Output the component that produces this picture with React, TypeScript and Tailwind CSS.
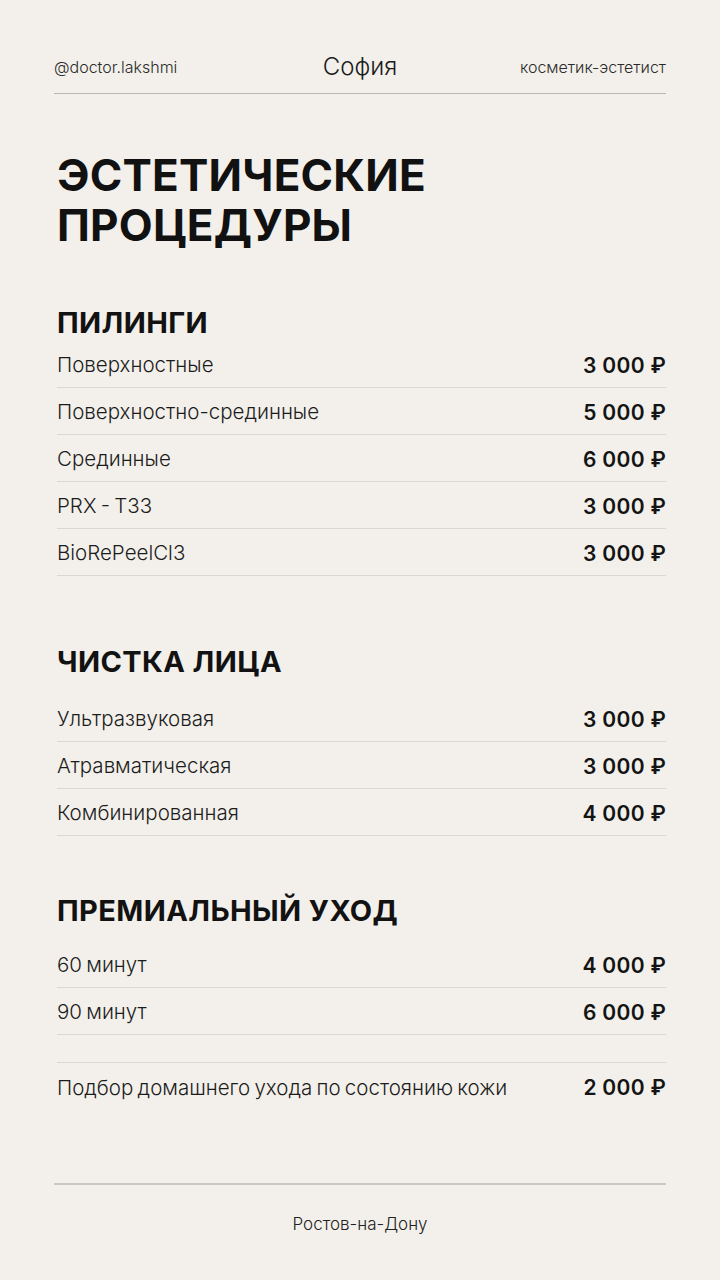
import * as React from "react";

interface Item {
    name: string;
    price: string;
}

const peels: Item[] = [
    { name: "Поверхностные", price: "3 000 ₽" },
    { name: "Поверхностно-срединные", price: "5 000 ₽" },
    { name: "Срединные", price: "6 000 ₽" },
    { name: "PRX - T33", price: "3 000 ₽" },
    { name: "BioRePeelCl3", price: "3 000 ₽" },
];

const cleaning: Item[] = [
    { name: "Ультразвуковая", price: "3 000 ₽" },
    { name: "Атравматическая", price: "3 000 ₽" },
    { name: "Комбинированная", price: "4 000 ₽" },
];

const premium: Item[] = [
    { name: "60 минут", price: "4 000 ₽" },
    { name: "90 минут", price: "6 000 ₽" },
];

function Row({ item, border = true }: { item: Item; border?: boolean }) {
    return (
        <div
            className={`h-[47px] pt-[3px] flex items-center justify-between ${
                border ? "border-b border-[#dcd8d1]" : ""
            }`}
        >
            <span className="text-[20.5px] font-light text-[#1c1c1c] [word-spacing:-1.5px]">{item.name}</span>
            <span className="text-[21px] font-semibold text-[#141414] tracking-[0.3px]">{item.price}</span>
        </div>
    );
}

function Heading({ children, className = "" }: { children: React.ReactNode; className?: string }) {
    return (
        <h2 className={`h-[34px] flex items-center text-[29px] font-bold text-[#121212] tracking-[0.4px] ${className}`}>
            {children}
        </h2>
    );
}

export default function App() {
    return (
        <div
            className="w-[720px] h-[1280px] bg-[#f3f0eb] flex flex-col"
            style={{ fontFamily: "Inter, 'Noto Sans', sans-serif" }}
        >
            {/* Header */}
            <div className="px-[54px] pt-[54px]">
                <div className="h-[26px] flex items-center justify-between text-[#2a2a2a]">
                    <span className="w-[180px] text-[16px] font-light">@doctor.lakshmi</span>
                    <span className="text-[24px] font-light text-[#1a1a1a]">София</span>
                    <span className="w-[180px] text-right text-[16px] font-light">косметик-эстетист</span>
                </div>
                <div className="mt-[13px] h-px bg-[#bdb8b0]" />
            </div>

            <div className="pl-[57px] pr-[54px]">
                <h1 className="mt-[56px] text-[44px] leading-[50px] font-bold text-[#111] tracking-[0.2px]">
                    ЭСТЕТИЧЕСКИЕ
                    <br />
                    ПРОЦЕДУРЫ
                </h1>

                <Heading className="mt-[56px]">ПИЛИНГИ</Heading>
                <div className="mt-px">
                    {peels.map((it) => (
                        <Row key={it.name} item={it} />
                    ))}
                </div>

                <Heading className="mt-[69px]">ЧИСТКА ЛИЦА</Heading>
                <div className="mt-[16px]">
                    {cleaning.map((it) => (
                        <Row key={it.name} item={it} />
                    ))}
                </div>

                <Heading className="mt-[58px]">ПРЕМИАЛЬНЫЙ УХОД</Heading>
                <div className="mt-[13px]">
                    {premium.map((it) => (
                        <Row key={it.name} item={it} />
                    ))}
                </div>

                <div className="mt-[27px] border-t border-[#dcd8d1]">
                    <Row item={{ name: "Подбор домашнего ухода по состоянию кожи", price: "2 000 ₽" }} border={false} />
                </div>
            </div>

            {/* Footer */}
            <div className="px-[54px] mt-[73px]">
                <div className="h-[2px] bg-[#cdc8c0]" />
                <div className="mt-[27px] text-center text-[17px] font-light text-[#222]">Ростов-на-Дону</div>
            </div>
        </div>
    );
}
